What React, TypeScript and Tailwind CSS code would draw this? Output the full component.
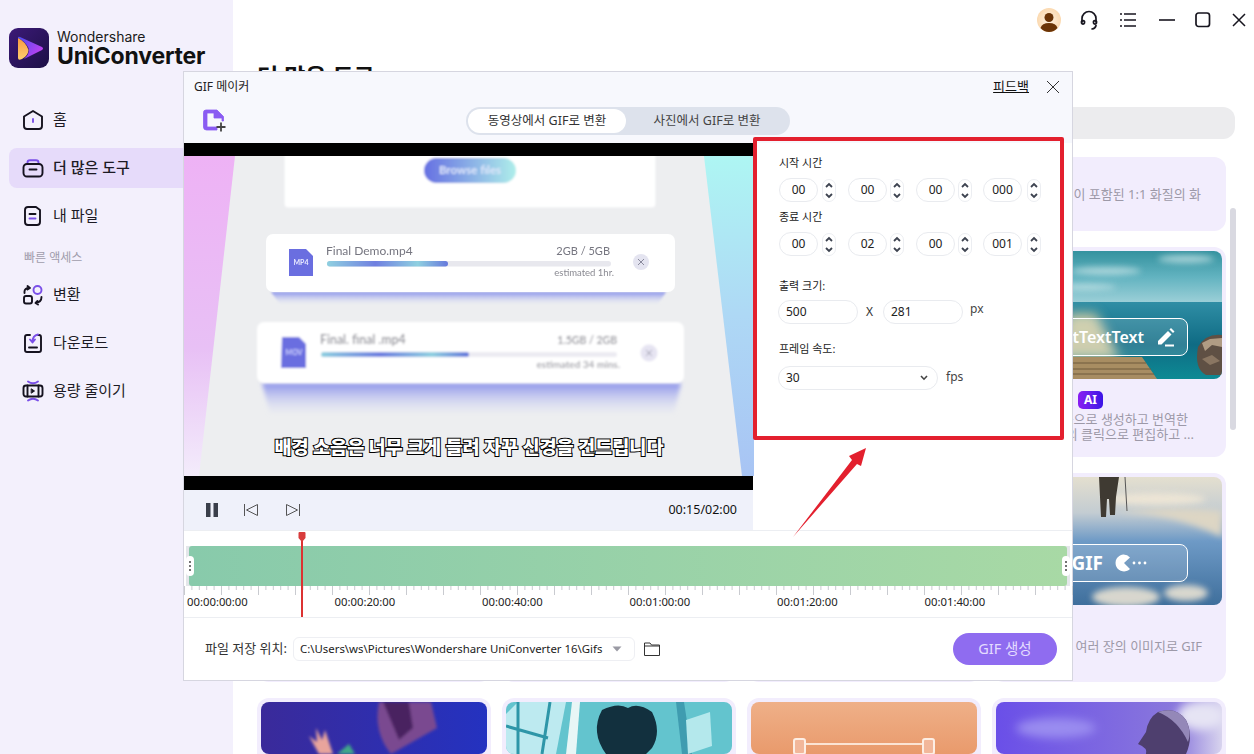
import React from "react";

function Logo() {
  return (
    <svg width="40" height="40" viewBox="0 0 40 40">
      <defs>
        <linearGradient id="lg1" x1="0" y1="0" x2="1" y2="1"><stop offset="0" stopColor="#3c1a78" /><stop offset="1" stopColor="#1c0f45" /></linearGradient>
        <linearGradient id="lg2" x1="0" y1="0" x2="1" y2="0.6"><stop offset="0" stopColor="#4a4cf0" /><stop offset="1" stopColor="#c040f0" /></linearGradient>
        <linearGradient id="lg3" x1="0" y1="0" x2="0" y2="1"><stop offset="0" stopColor="#f89a40" /><stop offset="1" stopColor="#ffd070" /></linearGradient>
      </defs>
      <rect width="40" height="40" rx="9" fill="url(#lg1)" />
      <path d="M9 10 Q9 8 11 9 L33 19 Q35 20.5 33 22 L15 31 Q21 26 19.5 20 Q16 13 9 10Z" fill="url(#lg2)" />
      <path d="M9 10 Q17 14 19.5 22 Q19 28 13 31 Q9 33 9 30Z" fill="url(#lg3)" />
    </svg>
  );
}

const P = "#7a4fe8";
const K = "#15121f";

function NavIcon({ name }: { name: string }) {
  const common = { width: 22, height: 22, viewBox: "0 0 22 22", fill: "none", strokeWidth: 1.9, strokeLinecap: "round" as const, strokeLinejoin: "round" as const };
  if (name === "home")
    return (
      <svg {...common}>
        <path d="M11 2 L20 7.5 V17 Q20 20 17 20 H5 Q2 20 2 17 V7.5 Z" stroke={K} />
        <path d="M11 10 V13" stroke={P} />
      </svg>
    );
  if (name === "tools")
    return (
      <svg {...common}>
        <path d="M5.5 7 V5.5 Q5.5 3.2 8 3.2 H14 Q16.5 3.2 16.5 5.5 V7" stroke={P} />
        <rect x="1.5" y="7" width="19" height="12.5" rx="3.5" stroke={K} />
        <path d="M7.5 12.5 H14.5" stroke={K} />
      </svg>
    );
  if (name === "files")
    return (
      <svg {...common}>
        <path d="M6 2 H14 L18 5 V17 Q18 20 15 20 H6 Q3 20 3 17 V5 Q3 2 6 2Z" stroke={K} />
        <path d="M7.5 9 H13.5" stroke={K} />
        <path d="M7.5 13.5 H13.5" stroke={P} />
      </svg>
    );
  if (name === "convert")
    return (
      <svg {...common}>
        <circle cx="15.5" cy="6" r="4" stroke={P} />
        <rect x="2" y="12" width="8" height="7.5" rx="2" stroke={K} />
        <path d="M2.5 9 V7.5 Q2.5 4 7 4 M5.5 2 L8 4 L5.5 5.5" stroke={K} />
        <path d="M19.5 13 Q19.5 18 14 19 M16 20.5 L13.5 19 L15.5 17" stroke={K} />
      </svg>
    );
  if (name === "download")
    return (
      <svg {...common}>
        <path d="M8 3 H5 Q3 3 3 5 V18 Q3 20 5 20 H17 Q19 20 19 18 V5 Q19 3 17 3 H16" stroke={K} />
        <path d="M16 2.5 Q10.5 3.5 10.5 10 M8 7.5 L10.5 10.5 L13 7.5" stroke={P} />
        <path d="M7 15.5 H15" stroke={K} />
      </svg>
    );
  return (
    <svg {...common}>
      <path d="M6 1.5 Q11 5 16 1.5 M6 20.5 Q11 17 16 20.5" stroke={P} />
      <rect x="1.5" y="5.5" width="19" height="11" rx="2.5" stroke={K} />
      <path d="M5.5 5.5 V16.5 M16.5 5.5 V16.5" stroke={K} />
      <path d="M9.5 9 L12.5 11 L9.5 13Z" fill={K} stroke={K} strokeWidth="1" />
    </svg>
  );
}

function NavItem({ icon, label, active }: { icon: string; label: string; active?: boolean }) {
  return (
    <div className={`mx-[9px] flex h-10 items-center gap-[9px] rounded-lg pl-[13px] ${active ? "bg-[#e6dbfa]" : ""}`}>
      <NavIcon name={icon} />
      <span className={`pb-[2px] text-[15px] leading-none text-[#1c1a24] ${active ? "font-medium" : ""}`}>{label}</span>
    </div>
  );
}

function Sidebar() {
  return (
    <aside className="flex h-full w-[233px] shrink-0 flex-col bg-[#f3f0fc]">
      <div className="flex h-[100px] items-start pl-[9px] pt-[28px]">
        <Logo />
        <div className="ml-2 flex flex-col">
          <span className="font-['Inter',sans-serif] text-[14px] leading-[17px] text-[#1a1a1a]">Wondershare</span>
          <span className="-mt-[1px] font-['Inter',sans-serif] text-[23px] font-bold leading-[25px] tracking-[-0.2px] text-[#111]">UniConverter</span>
        </div>
      </div>
      <div className="flex flex-col gap-2">
        <NavItem icon="home" label="홈" />
        <NavItem icon="tools" label="더 많은 도구" active />
        <NavItem icon="files" label="내 파일" />
      </div>
      <div className="flex h-[39px] items-center pl-[24px] pt-[5px] text-[12px] text-[#a09cab]">빠른 액세스</div>
      <div className="flex flex-col gap-2">
        <NavItem icon="convert" label="변환" />
        <NavItem icon="download" label="다운로드" />
        <NavItem icon="shrink" label="용량 줄이기" />
      </div>
    </aside>
  );
}

function TopIcons() {
  return (
    <div className="flex h-10 items-center justify-end pr-[3px]">
      <svg width="24" height="24" viewBox="0 0 24 24">
        <defs>
          <radialGradient id="av"><stop offset="0" stopColor="#fff3e2" /><stop offset="1" stopColor="#fbd9b0" /></radialGradient>
        </defs>
        <circle cx="12" cy="12" r="12" fill="url(#av)" />
        <circle cx="12" cy="9.5" r="4.5" fill="#6b3406" />
        <path d="M3.5 20 Q5 15 12 15 Q19 15 20.5 20 Q17 24 12 24 Q7 24 3.5 20Z" fill="#6b3406" />
      </svg>
      <svg className="ml-[16px]" width="24" height="24" viewBox="0 0 24 24" fill="none" stroke="#17151f" strokeWidth="1.7" strokeLinecap="round">
        <path d="M5 14 V10.5 a7 7 0 0 1 14 0 V14" />
        <path d="M4.5 13.5 a1.7 1.7 0 0 1 3 0 v1.5 a1.6 1.6 0 0 1 -3 0Z" />
        <path d="M16.5 13.5 a1.7 1.7 0 0 1 3 0 v1.5 a1.6 1.6 0 0 1 -3 0Z" />
        <path d="M19 17.5 Q18.5 20.5 15 21" />
      </svg>
      <svg className="ml-[15px]" width="24" height="24" viewBox="0 0 24 24" stroke="#17151f" strokeWidth="1.6">
        <path d="M8 6 H20 M8 12 H20 M8 18 H20" />
        <path d="M4 6 H6 M4 12 H6 M4 18 H6" />
      </svg>
      <svg className="ml-[15px]" width="24" height="24" viewBox="0 0 24 24" stroke="#17151f" strokeWidth="1.6"><path d="M4 12 H20" /></svg>
      <svg className="ml-[12px]" width="24" height="24" viewBox="0 0 24 24" fill="none" stroke="#17151f" strokeWidth="1.7"><rect x="5" y="5" width="13.5" height="13.5" rx="2.5" /></svg>
      <svg className="ml-[12px]" width="24" height="24" viewBox="0 0 24 24" stroke="#17151f" strokeWidth="1.5"><path d="M6 6 L18 18 M18 6 L6 18" /></svg>
    </div>
  );
}

function SeaImage() {
  return (
    <svg className="block" width="226" height="128" viewBox="0 0 226 128" preserveAspectRatio="none">
      <defs>
        <linearGradient id="sky" x1="0" y1="0" x2="0" y2="1"><stop offset="0" stopColor="#35929f" /><stop offset="0.5" stopColor="#62b3c0" /><stop offset="1" stopColor="#9dd0d8" /></linearGradient>
        <linearGradient id="sea" x1="0" y1="0" x2="0" y2="1"><stop offset="0" stopColor="#2f8ea5" /><stop offset="0.55" stopColor="#0f6b84" /><stop offset="1" stopColor="#0d8a94" /></linearGradient>
        <filter id="sb" x="-30%" y="-30%" width="160%" height="160%"><feGaussianBlur stdDeviation="3" /></filter>
        <filter id="sb2" x="-30%" y="-30%" width="160%" height="160%"><feGaussianBlur stdDeviation="6" /></filter>
      </defs>
      <rect width="226" height="52" fill="url(#sky)" />
      <g filter="url(#sb)" fill="#cfe8ea" opacity="0.7">
        <ellipse cx="110" cy="20" rx="35" ry="4" />
        <ellipse cx="190" cy="8" rx="28" ry="4" />
        <ellipse cx="90" cy="36" rx="30" ry="3" />
      </g>
      <rect y="51" width="226" height="77" fill="url(#sea)" />
      <path d="M60 108 L72 62 H100 L124 108Z" fill="#e6d6a6" opacity="0.85" filter="url(#sb2)" />
      <path d="M60 106 H146 L161 128 H60Z" fill="#a88d62" />
      <path d="M60 112 H150 M60 118 H155 M60 123 H158" stroke="#6f5a3c" strokeWidth="1" />
      <path d="M202 96 Q210 82 226 84 V124 H210 Q198 118 202 96Z" fill="#5f5044" />
      <path d="M206 92 L214 88 L226 87 V96 L216 94 L209 100Z" fill="#b09c84" />
      <path d="M206 108 L216 104 L224 110 L214 114Z" fill="#8a7662" />
    </svg>
  );
}

function SnowImage() {
  return (
    <svg className="block" width="226" height="128" viewBox="0 0 226 128" preserveAspectRatio="none">
      <defs>
        <linearGradient id="sn" x1="0" y1="0" x2="0" y2="1"><stop offset="0" stopColor="#e4dfcf" /><stop offset="0.28" stopColor="#c3ccd2" /><stop offset="0.5" stopColor="#6e9ac6" /><stop offset="1" stopColor="#3f6f9c" /></linearGradient>
        <filter id="sn2" x="-30%" y="-30%" width="160%" height="160%"><feGaussianBlur stdDeviation="3" /></filter>
      </defs>
      <rect width="226" height="128" fill="url(#sn)" />
      <path d="M120 36 Q170 34 226 60 V34 Q180 28 120 36Z" fill="#ddd6c4" filter="url(#sn2)" />
      <g filter="url(#sn2)" fill="#f2e8d6" opacity="0.85">
        <ellipse cx="130" cy="120" rx="34" ry="10" />
        <ellipse cx="190" cy="116" rx="22" ry="8" />
        <ellipse cx="160" cy="22" rx="50" ry="6" />
      </g>
      <path d="M103 0 H123 L120 20 L119 38 H114 L113 22 L111 22 L110 40 H105 L104 20Z" fill="#3f3a32" />
      <path d="M129 0 L131 34" stroke="#555" strokeWidth="1" />
    </svg>
  );
}

function BottomImage({ kind }: { kind: number }) {
  if (kind === 0)
    return (
      <svg className="block" width="226" height="52" viewBox="0 0 226 52">
        <defs>
          <linearGradient id="b0" x1="0" y1="0" x2="1" y2="0"><stop offset="0" stopColor="#3a2a9a" /><stop offset="1" stopColor="#2432c0" /></linearGradient>
          <filter id="b0f" x="-20%" y="-20%" width="140%" height="140%"><feGaussianBlur stdDeviation="1.5" /></filter>
        </defs>
        <rect width="226" height="52" fill="url(#b0)" />
        <g filter="url(#b0f)">
          <path d="M118 0 H170 L176 26 L130 52 Q112 30 118 0Z" fill="#7a4a90" />
          <path d="M122 0 H148 L152 26 L138 38Z" fill="#4a2460" />
          <path d="M48 34 L58 52 H72 L64 28 L61 38 L55 26 L56 40Z" fill="#e8a49c" />
          <path d="M76 52 L88 42 L94 52Z" fill="#3fa888" />
        </g>
      </svg>
    );
  if (kind === 1)
    return (
      <svg className="block" width="226" height="52" viewBox="0 0 226 52">
        <rect width="226" height="52" fill="#63c4ce" />
        <path d="M12 0 H60 L50 52 H0 V12Z" fill="#bdeaf0" />
        <path d="M12 0 V52 M44 0 L36 52 M0 24 L42 36" stroke="#2e96a8" strokeWidth="3" fill="none" />
        <path d="M66 0 H74 L70 52 H60Z" fill="#e8f6f6" />
        <path d="M170 0 L176 52 H186 L178 0Z" fill="#3f9cb0" />
        <path d="M180 18 L204 10 L206 44 L182 52Z" fill="#b4e8ec" />
        <path d="M96 8 Q112 0 122 6 Q132 0 146 10 Q156 30 146 46 L140 52 H100 Q84 30 96 8Z" fill="#12303e" />
      </svg>
    );
  if (kind === 2)
    return (
      <svg className="block" width="226" height="52" viewBox="0 0 226 52">
        <defs><linearGradient id="b2" x1="0" y1="0" x2="0" y2="1"><stop offset="0" stopColor="#efb088" /><stop offset="1" stopColor="#e99a6c" /></linearGradient></defs>
        <rect width="226" height="52" fill="url(#b2)" />
        <path d="M52 42 H176" stroke="#fbe4d4" strokeWidth="2" />
        <rect x="43" y="37" width="11" height="15" rx="2" fill="#f2b79a" stroke="#fdeee4" strokeWidth="2" />
        <rect x="172" y="37" width="11" height="15" rx="2" fill="#f2b79a" stroke="#fdeee4" strokeWidth="2" />
      </svg>
    );
  return (
    <svg className="block" width="226" height="52" viewBox="0 0 226 52">
      <defs>
        <linearGradient id="b3" x1="0" y1="0" x2="1" y2="0"><stop offset="0" stopColor="#6a4fe8" /><stop offset="0.8" stopColor="#8a78dc" /><stop offset="1" stopColor="#d8d4ee" /></linearGradient>
        <filter id="b3f" x="-30%" y="-50%" width="160%" height="200%"><feGaussianBlur stdDeviation="5" /></filter>
      </defs>
      <rect width="226" height="52" fill="url(#b3)" />
      <ellipse cx="60" cy="26" rx="40" ry="10" fill="#9a8cf0" filter="url(#b3f)" />
      <ellipse cx="205" cy="14" rx="24" ry="14" fill="#e6e4f4" filter="url(#b3f)" />
      <path d="M142 42 L150 30 Q152 16 162 10 Q180 4 190 18 Q198 34 190 52 H150 Q152 46 142 42Z" fill="#4e3f6e" />
      <path d="M162 10 Q180 4 190 18 Q196 30 192 40 Q182 18 162 10Z" fill="#9488b8" />
    </svg>
  );
}

function Card({ img, children, className = "" }: { img?: React.ReactNode; children?: React.ReactNode; className?: string }) {
  return (
    <div className={`overflow-hidden rounded-xl bg-[#f2edfd] ${img ? "p-1" : ""} ${className}`}>
      {img && <div className="relative overflow-hidden rounded-lg">{img}</div>}
      {children}
    </div>
  );
}

function Pill({ children, className }: { children: React.ReactNode; className: string }) {
  return (
    <div className={`absolute left-[46px] top-[67px] flex h-[38px] w-[146px] items-center justify-end rounded-lg border border-white bg-white/15 text-[16px] font-semibold text-white ${className}`}>
      {children}
    </div>
  );
}

function CardGrid() {
  return (
    <div className="mr-[28px] mt-[18px] grid grid-cols-4 gap-x-[11px] gap-y-4 [grid-template-rows:74px_210px_209px_80px]">
      {[0, 1, 2].map((i) => (
        <Card key={i} />
      ))}
      <Card className="flex items-center justify-end pr-[25px] pt-[1px] text-[13px] text-[#9d99a8]">
        <span className="whitespace-nowrap">이 포함된 1:1 화질의 화</span>
      </Card>
      {[0, 1, 2].map((i) => (
        <Card key={i} img={<div className="h-[128px] bg-[#8fb8d0]" />} />
      ))}
      <Card
        img={
          <>
            <SeaImage />
            <Pill className="gap-[11px] pr-[10px]">
              <span className="whitespace-nowrap">tTextText</span>
              <svg width="22" height="22" viewBox="0 0 22 22" fill="white">
                <path d="M3 15 L13 5 L16.5 8.5 L6.5 18.5 H3Z" />
                <path d="M14.5 3.5 L16 2 L19.5 5.5 L18 7Z" />
                <path d="M10 18.5 H19 V20.5 H10Z" />
              </svg>
            </Pill>
          </>
        }
      >
        <div className="mt-3 flex justify-end pr-[119px]">
          <span className="flex h-[18px] w-[25px] items-center justify-center rounded-[5px] bg-gradient-to-r from-[#8a1cf2] to-[#3a12e6] text-[12px] font-bold text-white">AI</span>
        </div>
        <div className="mt-[3px] pr-[34px] text-right text-[13px] leading-[15px] text-[#9d99a8]">
          <div className="whitespace-nowrap">자동으로 생성하고 번역한</div>
          <div className="translate-x-[6px] whitespace-nowrap">한 번의 클릭으로 편집하고 ...</div>
        </div>
      </Card>
      {[0, 1, 2].map((i) => (
        <Card key={i} img={<div className="h-[128px] bg-[#9cc0d0]" />} />
      ))}
      <Card
        img={
          <>
            <SnowImage />
            <Pill className="gap-[12px] pr-[40px]">
              <span className="whitespace-nowrap text-[19px] font-bold">GIF</span>
              <svg width="32" height="22" viewBox="0 0 32 22" fill="white">
                <path d="M8 2.5 A8.5 8.5 0 1 0 15 17 L9 11 L15 5.5 A8.5 8.5 0 0 0 8 2.5Z" />
                <circle cx="19" cy="11" r="1.4" />
                <circle cx="24.5" cy="11" r="1.4" />
                <circle cx="30" cy="11" r="1.4" />
              </svg>
            </Pill>
          </>
        }
      >
        <div className="mt-[34px] pr-[20px] text-right text-[13px] leading-[15px] text-[#9d99a8]">
          <span className="whitespace-nowrap">여러 장의 이미지로 GIF</span>
        </div>
      </Card>
      {[0, 1, 2, 3].map((i) => (
        <Card key={i} img={<BottomImage kind={i} />} />
      ))}
    </div>
  );
}

function Main() {
  return (
    <main className="min-w-0 flex-1 pl-[24px]">
      <TopIcons />
      <div className="mt-[18px] h-[36px] text-[23px] font-bold leading-[36px] text-[#111]">더 많은 도구</div>
      <div className="mr-[19px] mt-[13px] h-8 rounded-xl bg-[#ececee]" />
      <CardGrid />
    </main>
  );
}

function VideoFrame() {
  return (
    <svg className="block" width="570" height="320" viewBox="0 0 570 320">
      <defs>
        <linearGradient id="pk" x1="0" y1="0" x2="0" y2="1"><stop offset="0" stopColor="#eeb2f5" /><stop offset="0.6" stopColor="#e8c0f5" /><stop offset="1" stopColor="#f3ecfb" /></linearGradient>
        <linearGradient id="cy" x1="0" y1="0" x2="0" y2="1"><stop offset="0" stopColor="#aef6f3" /><stop offset="0.5" stopColor="#aed8f5" /><stop offset="1" stopColor="#a8c4f4" /></linearGradient>
        <linearGradient id="br" x1="0" y1="0" x2="1" y2="0"><stop offset="0" stopColor="#6670e2" /><stop offset="1" stopColor="#aeeeea" /></linearGradient>
        <linearGradient id="bar" x1="0" y1="0" x2="1" y2="0"><stop offset="0" stopColor="#8fd0e0" /><stop offset="0.4" stopColor="#6f7fe0" /><stop offset="0.75" stopColor="#8fd0e0" /><stop offset="1" stopColor="#6678dc" /></linearGradient>
        <linearGradient id="sh" x1="0" y1="0" x2="0" y2="1"><stop offset="0" stopColor="#8a92ea" /><stop offset="1" stopColor="#d8dcf4" stopOpacity="0.1" /></linearGradient>
        <filter id="f06" x="-5%" y="-20%" width="110%" height="140%"><feGaussianBlur stdDeviation="0.5" /></filter>
        <filter id="f1" x="-5%" y="-20%" width="110%" height="140%"><feGaussianBlur stdDeviation="1" /></filter>
        <filter id="f2" x="-5%" y="-30%" width="110%" height="160%"><feGaussianBlur stdDeviation="2" /></filter>
      </defs>
      <rect width="570" height="320" fill="#edeef0" />
      <path d="M0 0 H51 L15 320 H0Z" fill="url(#pk)" />
      <path d="M520 0 H570 V320 H558Z" fill="url(#cy)" />
      <path d="M87 136 H482 L474 148 H96Z" fill="url(#sh)" filter="url(#f1)" />
      <path d="M78 227 H497 L490 258 H86Z" fill="url(#sh)" filter="url(#f2)" />
      <g filter="url(#f1)">
        <rect x="100" y="-6" width="372" height="58" rx="4" fill="#fff" stroke="#dfe0e4" strokeWidth="0.5" />
        <rect x="240" y="2" width="92" height="25" rx="12.5" fill="url(#br)" />
        <text x="286" y="18" textAnchor="middle" fontSize="11.5" fontWeight="700" fill="#dfe7fb" fontFamily="Lato, sans-serif">Browse files</text>
      </g>
      <g filter="url(#f06)">
        <rect x="82" y="78" width="409" height="58" rx="7" fill="#fff" />
        <path d="M105 93 H122 L129 100 V120 H105Z" fill="#6a6ee0" />
        <text x="117" y="109" textAnchor="middle" fontSize="7" fontWeight="700" fill="#e8eaff" fontFamily="Lato, sans-serif">MP4</text>
        <text x="142" y="99" fontSize="12" fill="#767680" fontFamily="Lato, sans-serif">Final Demo.mp4</text>
        <text x="426" y="99" textAnchor="end" fontSize="11" fill="#767680" fontFamily="Lato, sans-serif">2GB / 5GB</text>
        <rect x="143" y="105" width="284" height="5.5" rx="2.7" fill="#e8e8ee" />
        <rect x="143" y="105" width="121" height="5.5" rx="2.7" fill="url(#bar)" />
        <text x="430" y="120" textAnchor="end" fontSize="9.5" fill="#8a8a92" fontFamily="Lato, sans-serif">estimated 1hr.</text>
        <circle cx="457" cy="106" r="8" fill="#e4e4f0" />
        <path d="M454 103 L460 109 M460 103 L454 109" stroke="#8a8a9c" strokeWidth="1" />
      </g>
      <g filter="url(#f1)">
        <rect x="73" y="166" width="427" height="61" rx="7" fill="#fff" />
        <path d="M98 181 H115 L122 188 V212 H97Z" fill="#6a6ee0" />
        <text x="110" y="199" textAnchor="middle" fontSize="7" fontWeight="700" fill="#cfd2ff" fontFamily="Lato, sans-serif">MOV</text>
        <text x="136" y="188" fontSize="12.3" fontWeight="600" fill="#8e8e96" fontFamily="Lato, sans-serif">Final. final .mp4</text>
        <text x="433" y="188" textAnchor="end" fontSize="10.5" fontWeight="600" fill="#8e8e96" fontFamily="Lato, sans-serif">1.5GB / 2GB</text>
        <rect x="137" y="196" width="296" height="5" rx="2.5" fill="#ecebf2" />
        <rect x="137" y="196" width="148" height="5" rx="2.5" fill="url(#bar)" />
        <text x="436" y="212" textAnchor="end" fontSize="10" fontWeight="600" fill="#9a9aa2" fontFamily="Lato, sans-serif">estimated 34 mins.</text>
        <circle cx="465" cy="197" r="8.5" fill="#e6e4f2" />
        <path d="M462 194 L468 200 M468 194 L462 200" stroke="#9a9aac" strokeWidth="1" />
      </g>
      <text x="285" y="298" textAnchor="middle" fontSize="18.6" fontWeight="900" fill="#fff" stroke="#000" strokeWidth="2" paintOrder="stroke" fontFamily="'Noto Sans CJK KR', sans-serif">배경 소음은 너무 크게 들려 자꾸 신경을 건드립니다</text>
    </svg>
  );
}

function Stepper() {
  return (
    <div className="flex h-[23px] w-[14px] items-center justify-center rounded-full border border-[#eceef2]">
      <svg width="10" height="19" viewBox="0 0 10 19" fill="none" stroke="#3d4350" strokeWidth="1.8">
        <path d="M2 6 L5 3 L8 6" />
        <path d="M2 13 L5 16 L8 13" />
      </svg>
    </div>
  );
}

function TimeBox({ value }: { value: string }) {
  return <div className="flex h-6 w-[39px] items-center justify-center rounded-full border border-[#e9ebef] text-[12px] text-[#222]">{value}</div>;
}

function TimeRow({ values }: { values: string[] }) {
  return (
    <div className="flex h-6 items-center">
      <TimeBox value={values[0]} />
      <div className="ml-[4px]"><Stepper /></div>
      <div className="ml-[12px]"><TimeBox value={values[1]} /></div>
      <div className="ml-[3px]"><Stepper /></div>
      <div className="ml-[12px]"><TimeBox value={values[2]} /></div>
      <div className="ml-[3px]"><Stepper /></div>
      <div className="ml-[11px]"><TimeBox value={values[3]} /></div>
      <div className="ml-[5px]"><Stepper /></div>
    </div>
  );
}

function SettingsPanel() {
  return (
    <div className="h-full flex-1 pl-[26px] pt-[12px] text-[#222]">
      <div className="h-4 text-[11px] leading-4">시작 시간</div>
      <div className="mt-[7px]"><TimeRow values={["00", "00", "00", "000"]} /></div>
      <div className="mt-[7px] h-4 text-[11px] leading-4">종료 시간</div>
      <div className="mt-[7px]"><TimeRow values={["00", "02", "00", "001"]} /></div>
      <div className="mt-[22px] h-4 text-[11px] leading-4">출력 크기:</div>
      <div className="mt-[6px] flex h-6 -translate-x-[1px] items-center text-[12px]">
        <div className="flex h-6 w-20 items-center rounded-full border border-[#e9ebef] pl-[7px]">500</div>
        <span className="ml-[8px] w-[17px] text-[12px] text-[#333]">X</span>
        <div className="flex h-6 w-20 items-center rounded-full border border-[#e9ebef] pl-[7px]">281</div>
        <span className="-mt-[6px] ml-[7px] text-[12px] text-[#444]">px</span>
      </div>
      <div className="mt-[17px] h-4 text-[11px] leading-4">프레임 속도:</div>
      <div className="mt-[9px] flex h-6 -translate-x-[1px] items-center text-[12px]">
        <div className="flex h-6 w-40 items-center justify-between rounded-full border border-[#e9ebef] pl-[7px] pr-[8px]">
          <span>30</span>
          <svg width="10" height="8" viewBox="0 0 10 8" fill="none" stroke="#444" strokeWidth="1.6"><path d="M2 2 L5 5.2 L8 2" /></svg>
        </div>
        <span className="-mt-[2px] ml-[8px] text-[12px] text-[#444]">fps</span>
      </div>
    </div>
  );
}

function Ruler() {
  const ticks: React.ReactNode[] = [];
  for (let i = 0; i <= 120; i++) {
    const x = 0.5 + i * 7.4;
    ticks.push(<line key={i} x1={x} x2={x} y1={0} y2={i % 5 === 0 ? 9 : 4} stroke="#c9cbd0" strokeWidth="1" />);
  }
  return (
    <svg className="block" width="890" height="10" viewBox="0 0 890 10">
      {ticks}
    </svg>
  );
}

function Handle() {
  return (
    <div className="relative z-10 flex h-5 w-2 shrink-0 flex-col items-center justify-center gap-[2px] rounded-[4px] bg-white">
      <span className="h-[2px] w-[2px] rounded-full bg-[#444]" />
      <span className="h-[2px] w-[2px] rounded-full bg-[#444]" />
      <span className="h-[2px] w-[2px] rounded-full bg-[#444]" />
    </div>
  );
}

function Timeline() {
  const labels = ["00:00:00:00", "00:00:20:00", "00:00:40:00", "00:01:00:00", "00:01:20:00", "00:01:40:00"];
  return (
    <div className="relative h-[88px] border-y border-[#eceef2]">
      <div className="mx-[2px] mt-[15px] flex h-10 items-center bg-[#e4e6ea]">
        <div className="relative z-10 -mr-[5px]"><Handle /></div>
        <div className="h-10 flex-1 rounded-[3px] bg-gradient-to-r from-[#88caab] to-[#a8d9a5]" />
        <div className="relative z-10 -ml-[5px]"><Handle /></div>
      </div>
      <Ruler />
      <div className="-mt-[1px] flex pl-[3px] text-[11.3px] leading-[14px] text-[#222]">
        {labels.map((l) => (
          <span key={l} className="w-[148px]">{l}</span>
        ))}
      </div>
      <div className="absolute bottom-0 left-[117px] top-[1px] w-[1.5px] bg-[#dc3232]" />
      <svg className="absolute left-[113.5px] top-[1px]" width="8" height="10" viewBox="0 0 8 10"><path d="M0.5 1 Q0.5 0 1.5 0 H6.5 Q7.5 0 7.5 1 V6 L4 10 L0.5 6Z" fill="#d83c3c" /></svg>
    </div>
  );
}

function Modal() {
  return (
    <div className="absolute left-[183px] top-[71px] flex h-[610px] w-[890px] flex-col border border-[#d6d6e0] bg-white">
      <div className="h-[71px] shrink-0 bg-[#f7f8fd]">
        <div className="flex h-[29px] items-center justify-between pl-[10px] pr-[11px] pt-[1px]">
          <span className="text-[12px] text-[#222]">GIF 메이커</span>
          <div className="flex items-center gap-[16px]">
            <span className="text-[13px] text-[#111] underline">피드백</span>
            <svg width="16" height="16" viewBox="0 0 16 16" stroke="#333" strokeWidth="1"><path d="M2 2 L14 14 M14 2 L2 14" /></svg>
          </div>
        </div>
        <div className="relative flex h-[42px] items-start justify-center pt-[6px]">
          <svg className="absolute left-[18px] top-[6px]" width="26" height="26" viewBox="0 0 26 26">
            <path d="M4 3 Q1.5 3 1.5 5.5 V20 Q1.5 23 4.5 23 H15 V20 H5 V6 H12 V11 H20 V14 H21.5 V9.5 L15 3Z" fill="#8a5cf2" stroke="#8a5cf2" strokeWidth="0.8" />
            <path d="M14 5 L19 9.5 H14Z" fill="#8a5cf2" />
            <path d="M19 15.5 V24.5 M14.5 20 H23.5" stroke="#444" strokeWidth="1.8" />
          </svg>
          <div className="flex h-7 w-[324px] items-center rounded-full bg-[#dde2ec] p-[2px] text-[12.5px]">
            <div className="flex h-6 w-[158px] items-center justify-center rounded-full bg-white text-[#333]">동영상에서 GIF로 변환</div>
            <div className="flex-1 text-center text-[#444]">사진에서 GIF로 변환</div>
          </div>
        </div>
      </div>
      <div className="flex h-[387px] shrink-0">
        <div className="w-[569px] shrink-0">
          <div className="h-[13px] bg-black" />
          <VideoFrame />
          <div className="h-[14px] bg-black" />
          <div className="flex h-[40px] items-center justify-between bg-[#eff1fa] pl-[21px] pr-[16px]">
            <div className="flex items-center">
              <svg width="14" height="16" viewBox="0 0 14 16" fill="#3a3f4a"><rect x="1" y="1" width="4.5" height="14" /><rect x="8.5" y="1" width="4.5" height="14" /></svg>
              <svg className="ml-[24px]" width="16" height="16" viewBox="0 0 16 16" fill="none" stroke="#555" strokeWidth="1"><path d="M1.5 2 V14 M14.5 2.5 V13.5 L3.5 8Z" /></svg>
              <svg className="ml-[26px]" width="16" height="16" viewBox="0 0 16 16" fill="none" stroke="#555" strokeWidth="1"><path d="M14.5 2 V14 M1.5 2.5 V13.5 L12.5 8Z" /></svg>
            </div>
            <span className="text-[12.5px] text-[#111]">00:15/02:00</span>
          </div>
        </div>
        <SettingsPanel />
      </div>
      <Timeline />
      <div className="flex flex-1 items-center pl-[21px] pr-[15px]">
        <span className="w-[88px] whitespace-nowrap text-[13px] text-[#333]">파일 저장 위치:</span>
        <div className="flex h-6 w-[342px] items-center justify-between rounded-md border border-[#eeeff3] pl-[6px] pr-[12px]">
          <span className="w-[306px] whitespace-nowrap text-[11.4px] text-[#222]">C:\Users\ws\Pictures\Wondershare UniConverter 16\Gifs</span>
          <svg width="10" height="6" viewBox="0 0 10 6"><path d="M0.5 0.5 H9.5 L5 5.5Z" fill="#9a9aa4" /></svg>
        </div>
        <svg className="ml-[8px]" width="18" height="16" viewBox="0 0 18 16" fill="none" stroke="#333" strokeWidth="1"><path d="M1.5 14.5 V2 H7 L8.5 4 H16.5 V14.5Z M1.5 5 H16.5" /></svg>
        <button className="ml-auto h-8 w-[104px] rounded-full bg-[#8f6cf0] text-[14.5px] text-[#e4dcff]">GIF 생성</button>
      </div>
    </div>
  );
}

function Annotation() {
  return (
    <>
      <div className="absolute left-[753px] top-[137px] h-[303px] w-[311px] rounded-[2px] border-[4px] border-[#e3202e]" />
      <svg className="absolute left-[785px] top-[440px]" width="90" height="105" viewBox="0 0 90 105">
        <path d="M8 97 L67 20 L64 16 L81 8 L76 26 L72 24Z" fill="#e3202e" />
      </svg>
    </>
  );
}

export default function App() {
  return (
    <div className="relative flex h-[754px] w-[1254px] overflow-hidden bg-white font-['Noto_Sans','Noto_Sans_CJK_KR',sans-serif]">
      <Sidebar />
      <Main />
      <div className="absolute left-[1230px] top-[208px] h-[222px] w-[6px] rounded-full bg-[#d9d9e1]" />
      <Modal />
      <Annotation />
    </div>
  );
}
